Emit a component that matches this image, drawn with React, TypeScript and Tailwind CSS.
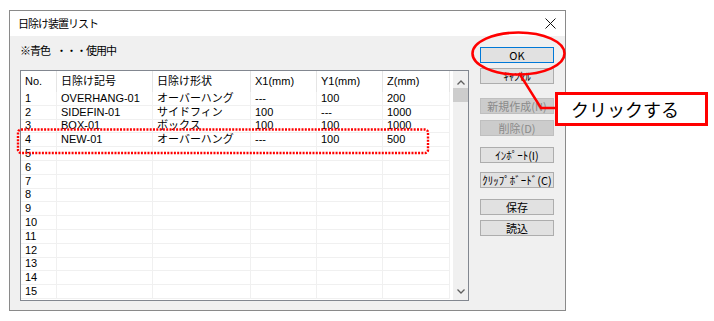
import React from 'react';

type Row = [string, string, string, string, string, string];

const rows: Row[] = [
  ['1', 'OVERHANG-01', 'オーバーハング', '---', '100', '200'],
  ['2', 'SIDEFIN-01', 'サイドフィン', '100', '---', '1000'],
  ['3', 'BOX-01', 'ボックス', '100', '100', '1000'],
  ['4', 'NEW-01', 'オーバーハング', '---', '100', '500'],
  ...Array.from({ length: 11 }, (_, i): Row => [String(i + 5), '', '', '', '', '']),
];

const headers = ['No.', '日除け記号', '日除け形状', 'X1(mm)', 'Y1(mm)', 'Z(mm)'];
const cols = 'grid grid-cols-[36px_96px_98px_66px_66px_67px]';

function Btn({ label, className = '', primary = false, disabled = false }: { label: string; className?: string; primary?: boolean; disabled?: boolean }) {
  return (
    <div
      className={`h-[16px] w-[74px] flex items-center justify-center text-[11px] leading-none border ${
        primary
          ? 'border-[#0078d7] bg-[#e1e1e1] text-black'
          : disabled
          ? 'border-[#bfbfbf] bg-[#cccccc] text-[#8a8a8a]'
          : 'border-[#adadad] bg-[#e1e1e1] text-black'
      } ${className}`}
    >
      {label}
    </div>
  );
}

export default function App() {
  return (
    <div className="relative w-[714px] h-[321px] bg-white overflow-hidden" style={{ fontFamily: '"Noto Sans CJK JP", "Noto Sans", sans-serif' }}>
      <div className="absolute left-[9px] top-[10px] w-[557px] h-[301px] border border-[#8a8a8a] flex flex-col">
        {/* title bar */}
        <div className="h-[25px] bg-white flex items-center pl-[8px] pr-[9px] text-[11px] tracking-[-1px] text-black">
          <span className="flex-1">日除け装置リスト</span>
          <svg width="11" height="11" viewBox="0 0 11 11">
            <path d="M0.5 0.5 L10.5 10.5 M10.5 0.5 L0.5 10.5" stroke="#111" strokeWidth="1" />
          </svg>
        </div>

        {/* body */}
        <div className="flex-1 bg-[#f0f0f0] flex pl-[10px]">
          <div className="flex flex-col pt-[8px]">
            <div className="h-[12px] flex items-center text-[11px] tracking-[-1px] text-black">
              <span>※青色</span>
              <span className="ml-[6px]">・・・使用中</span>
            </div>
            <div className="mt-[14px] w-[449px] h-[231px] border border-[#828790] bg-white flex">
              <div
                className="w-[429px] flex flex-col"
                style={{ fontFamily: '"Liberation Sans", "Noto Sans CJK JP", sans-serif' }}
              >
                <div className={`${cols} h-[21px] text-[11px] text-black`}>
                  {headers.map((h) => (
                    <div key={h} className="border-r border-[#e5e5e5] pl-[4px] flex items-center">{h}</div>
                  ))}
                </div>
                {rows.map((r, i) => (
                  <div key={i} className={`${cols} h-[13.8px] text-[11px] text-black leading-none`}>
                    {r.map((c, j) => (
                      <div key={j} className="border-r border-b border-[#f0f0f0] pl-[4px] flex items-center whitespace-nowrap">{c}</div>
                    ))}
                  </div>
                ))}
              </div>
              <div className="w-[3px]" />
              <div className="w-[15px] bg-[#f0f0f0] flex flex-col">
                <div className="h-[17px] flex items-end justify-center pb-[3px]">
                  <svg width="8" height="5" viewBox="0 0 8 5"><path d="M0.5 4.5 L4 1 L7.5 4.5" stroke="#606060" strokeWidth="1.3" fill="none" /></svg>
                </div>
                <div className="h-[14px] bg-[#cdcdcd]" />
                <div className="flex-1" />
                <div className="h-[17px] flex items-center justify-center">
                  <svg width="8" height="5" viewBox="0 0 8 5"><path d="M0.5 0.5 L4 4 L7.5 0.5" stroke="#606060" strokeWidth="1.3" fill="none" /></svg>
                </div>
              </div>
            </div>
          </div>

          <div className="ml-[11px] flex flex-col pt-[11px]">
            <Btn label="OK" primary />
            <Btn label="ｷｬﾝｾﾙ" className="mt-[5px]" />
            <Btn label="新規作成(N)" disabled className="mt-[14px]" />
            <Btn label="削除(D)" disabled className="mt-[6px]" />
            <Btn label="ｲﾝﾎﾟｰﾄ(I)" className="mt-[11px]" />
            <Btn label="ｸﾘｯﾌﾟﾎﾞｰﾄﾞ(C)" className="mt-[9px]" />
            <Btn label="保存" className="mt-[11px]" />
            <Btn label="読込" className="mt-[5px]" />
          </div>
        </div>
      </div>

      {/* annotations */}
      <svg className="absolute left-0 top-0 pointer-events-none" width="714" height="321" viewBox="0 0 714 321">
        <ellipse cx="518.5" cy="53.5" rx="46" ry="21" fill="none" stroke="#ff0000" strokeWidth="2.6" />
        <polyline points="519,73 541,108 556,108" fill="none" stroke="#ff0000" strokeWidth="2.4" />
        <rect x="18" y="129.5" width="410" height="23.5" rx="3" fill="none" stroke="#ff0000" strokeWidth="2.4" strokeDasharray="2 1.3" />
      </svg>
      <div className="absolute left-[555px] top-[92px] w-[153px] h-[34px] border-[3px] border-[#ff0000] bg-white flex items-center pl-[13px] text-[18px] text-black leading-none">
        クリックする
      </div>
    </div>
  );
}
